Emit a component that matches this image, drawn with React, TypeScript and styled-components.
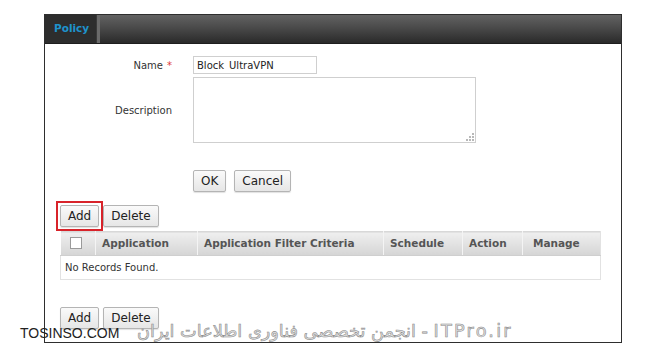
import React from "react";
import styled, { createGlobalStyle } from "styled-components";

const GlobalStyle = createGlobalStyle`
  html, body {
    margin: 0;
    padding: 0;
    background: #ffffff;
    font-family: "DejaVu Sans", Verdana, sans-serif;
  }
`;

const Page = styled.div`
  position: relative;
  width: 653px;
  height: 352px;
  padding: 14px 0 0 44px;
  box-sizing: border-box;
`;

const Panel = styled.div`
  width: 578px;
  height: 329px;
  box-sizing: border-box;
  border: 1px solid #2e2e2e;
  display: flex;
  flex-direction: column;
`;

const TitleBar = styled.div`
  height: 28px;
  display: flex;
  background: linear-gradient(#626262, #4a4a4a 45%, #2a2a2a);
  border-bottom: 1px solid #1e1e1e;
`;

const Tab = styled.div`
  width: 43px;
  padding: 0 0 3px 9px;
  display: flex;
  align-items: center;
  background: #2d2d2d;
  color: #1e93cd;
  font-weight: bold;
  font-size: 10.5px;
  border-right: 3px solid #6a6a6a;
  box-shadow: inset -1px 0 0 #3a3a3a;
`;

const Form = styled.div`
  display: grid;
  grid-template-columns: 127px auto;
  column-gap: 21px;
  row-gap: 3px;
  padding-top: 12px;
  align-items: center;
  justify-items: start;
`;

const Label = styled.div`
  justify-self: end;
  font-size: 10px;
  color: #333;
`;

const Required = styled.span`
  color: #e03a3a;
  margin-left: 4px;
`;

const TextInput = styled.input`
  width: 124px;
  height: 18px;
  box-sizing: border-box;
  border: 1px solid #cfcfcf;
  padding: 0 3px;
  line-height: 16px;
  font-family: "DejaVu Sans", sans-serif;
  font-size: 10px;
  color: #222;
  outline: none;
`;

const AreaWrap = styled.div`
  position: relative;
  width: 283px;
  height: 66px;
`;

const TextArea = styled.textarea`
  width: 100%;
  height: 100%;
  box-sizing: border-box;
  border: 1px solid #cfcfcf;
  resize: none;
  outline: none;
  margin: 0;
  display: block;
`;

const Grip = styled.svg`
  position: absolute;
  right: 2px;
  bottom: 2px;
`;

const FormActions = styled.div`
  display: flex;
  gap: 8px;
  margin-top: 27px;
  padding-left: 148px;
`;

const ListActions = styled.div<{ $top: number }>`
  display: flex;
  gap: 4px;
  padding-left: 15px;
  margin-top: ${(p) => p.$top}px;
`;

const Button = styled.button`
  height: 22px;
  box-sizing: border-box;
  padding: 0 7px;
  border: 1px solid #b4b4b4;
  border-radius: 2px;
  background: linear-gradient(#fafafa, #e6e6e6);
  box-shadow: 0 1px 1px rgba(0, 0, 0, 0.12);
  font-family: "DejaVu Sans", sans-serif;
  font-size: 12px;
  color: #222;
  cursor: pointer;
`;

const Highlight = styled.div`
  display: flex;
  outline: 2px solid #d8232a;
  outline-offset: 2px;
`;

const Table = styled.table`
  margin: 4px 0 0 15px;
  width: 540px;
  border-collapse: collapse;
  table-layout: fixed;
  font-size: 10px;
`;

const HeadCell = styled.th<{ $w: number }>`
  width: ${(p) => p.$w}px;
  height: 24px;
  padding: 0 6px 2px;
  box-sizing: border-box;
  text-align: left;
  font-size: 10.5px;
  font-weight: bold;
  color: #555;
  background: linear-gradient(#efefef, #d5d5d5);
  border-top: 1px solid #d8d8d8;
  border-bottom: 1px solid #cfcfcf;
  border-right: 1px solid #f4f4f4;
  &:last-child {
    padding-left: 10px;
    border-right: 1px solid #e2e2e2;
  }
`;

const Check = styled.span`
  display: inline-block;
  width: 12px;
  height: 12px;
  margin-left: 3px;
  vertical-align: middle;
  background: #fff;
  border: 1px solid #9a9a9a;
  box-sizing: border-box;
`;

const EmptyCell = styled.td`
  height: 23px;
  padding: 0 4px;
  color: #333;
  border: 1px solid #e2e2e2;
  border-top: none;
`;

const MarkSite = styled.div`
  position: absolute;
  left: 20px;
  top: 325px;
  font-family: "Liberation Sans", Arial, sans-serif;
  font-size: 14px;
  color: #222;
`;

const MarkText = styled.div`
  position: absolute;
  left: 137px;
  top: 321px;
  font-family: "DejaVu Sans", sans-serif;
  font-size: 17.7px;
  color: #e2e2e2;
  -webkit-text-stroke: 0.6px #8c8c8c;
  white-space: nowrap;
`;

const Latin = styled.span`
  letter-spacing: 2.2px;
`;

const columns = [
  { title: "Application", w: 102 },
  { title: "Application Filter Criteria", w: 186 },
  { title: "Schedule", w: 79 },
  { title: "Action", w: 60 },
  { title: "Manage", w: 78 },
];

const App = () => {
  return (
    <Page>
      <GlobalStyle />
      <Panel>
        <TitleBar>
          <Tab>Policy</Tab>
        </TitleBar>
        <Form>
          <Label>
            Name<Required>*</Required>
          </Label>
          <TextInput defaultValue="Block_UltraVPN" />
          <Label>Description</Label>
          <AreaWrap>
            <TextArea />
            <Grip width="8" height="8" viewBox="0 0 8 8">
              <g fill="#b8b8b8">
                <rect x="6" y="0" width="2" height="2" />
                <rect x="3" y="3" width="2" height="2" />
                <rect x="6" y="3" width="2" height="2" />
                <rect x="0" y="6" width="2" height="2" />
                <rect x="3" y="6" width="2" height="2" />
                <rect x="6" y="6" width="2" height="2" />
              </g>
            </Grip>
          </AreaWrap>
        </Form>
        <FormActions>
          <Button>OK</Button>
          <Button>Cancel</Button>
        </FormActions>
        <ListActions $top={13}>
          <Highlight>
            <Button>Add</Button>
          </Highlight>
          <Button>Delete</Button>
        </ListActions>
        <Table>
          <thead>
            <tr>
              <HeadCell $w={35}>
                <Check />
              </HeadCell>
              {columns.map((c) => (
                <HeadCell key={c.title} $w={c.w}>
                  {c.title}
                </HeadCell>
              ))}
            </tr>
          </thead>
          <tbody>
            <tr>
              <EmptyCell colSpan={6}>No Records Found.</EmptyCell>
            </tr>
          </tbody>
        </Table>
        <ListActions $top={27}>
          <Button>Add</Button>
          <Button>Delete</Button>
        </ListActions>
      </Panel>
      <MarkSite>TOSINSO.COM</MarkSite>
      <MarkText>
        انجمن تخصصی فناوری اطلاعات ایران - <Latin>ITPro.ir</Latin>
      </MarkText>
    </Page>
  );
};

export default App;
